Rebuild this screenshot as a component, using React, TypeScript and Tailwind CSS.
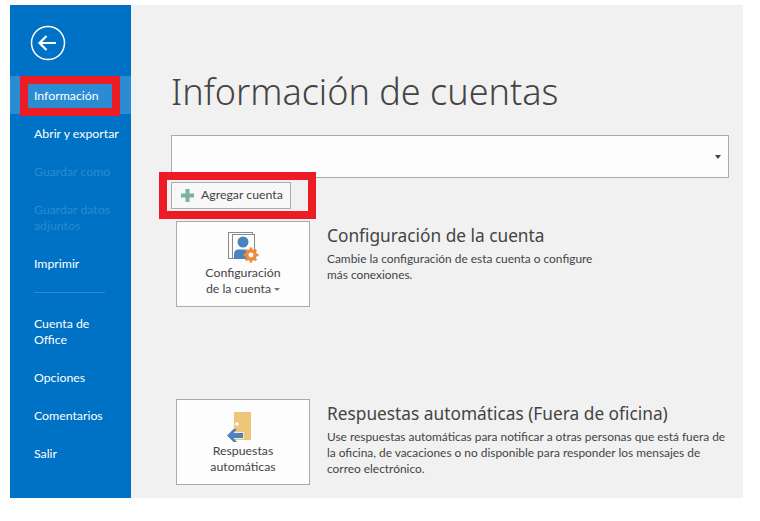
import React from "react";

const font = { fontFamily: '"Noto Sans", "Open Sans", sans-serif' };

const navTop = [
  { label: ["Información"], active: true },
  { label: ["Abrir y exportar"] },
  { label: ["Guardar como"], disabled: true },
  { label: ["Guardar datos", "adjuntos"], disabled: true },
  { label: ["Imprimir"] },
];

const navBottom = [
  { label: ["Cuenta de", "Office"] },
  { label: ["Opciones"] },
  { label: ["Comentarios"] },
  { label: ["Salir"] },
];

type NavEntry = { label: string[]; active?: boolean; disabled?: boolean };

function NavItem({ item }: { item: NavEntry }) {
  return (
    <div
      className={
        "pl-6 pt-[12px] pb-[10px] font-['Lato'] text-[12.3px] leading-4 " +
        (item.active ? "bg-[#2a8dd4] " : "") +
        (item.disabled ? "text-[#2b8ad0]" : "text-white")
      }
    >
      {item.label.map((l) => (
        <div key={l} className="whitespace-nowrap">
          {l}
        </div>
      ))}
    </div>
  );
}

function BackIcon() {
  return (
    <svg width="36" height="36" viewBox="0 0 36 36" fill="none" stroke="white">
      <circle cx="18" cy="18" r="16.5" strokeWidth="1.5" />
      <path d="M26 18H9.5M16.5 11l-7 7 7 7" strokeWidth="2.2" />
    </svg>
  );
}

function AccountIcon() {
  return (
    <svg width="32" height="32" viewBox="0 0 32 32" className="block">
      <rect x="1.5" y="0.5" width="24" height="26" fill="#fdfdfd" stroke="#8a8a8a" />
      <rect x="5.5" y="2.5" width="22" height="24" fill="#fdfdfd" stroke="#8a8a8a" />
      <circle cx="16" cy="10" r="5.5" fill="#4a83bd" />
      <path d="M7 27v-5c0-3 2-4.500 4-4.500h6c2 0 3 1.500 3 4.500v5z" fill="#4a83bd" />
      <circle cx="24" cy="23" r="4.200" fill="#fdfdfd" stroke="#ed8b3c" strokeWidth="3.400" />
      <path
        d="M24 15.500v3M24 27.500v3M16.500 23h3M28.500 23h3M18.700 17.700l2 2M27.300 26.300l2 2M18.700 28.300l2-2M27.300 19.700l2-2"
        stroke="#ed8b3c"
        strokeWidth="2.400"
      />
    </svg>
  );
}

function ReplyIcon() {
  return (
    <svg width="32" height="30" viewBox="0 0 32 30" className="block">
      <rect x="7" y="0" width="17" height="28" fill="#eec67a" />
      <rect x="8.500" y="10.500" width="3" height="3" fill="#fff" />
      <path d="M6 20h11v7H6z" fill="#fff" opacity="0.6" />
      <path d="M0 23.500 6.500 17H10l-3.500 4H16v5H6.500l3.500 4H6.500z" fill="#4a83bd" />
    </svg>
  );
}

function ActionCard({
  icon,
  lines,
  caret,
}: {
  icon: React.ReactNode;
  lines: string[];
  caret?: boolean;
}) {
  return (
    <div className="ml-[5px] flex h-[86px] w-[134px] shrink-0 flex-col items-center justify-end border border-[#ababab] bg-[#fdfdfd] pb-[9px] font-['Lato'] text-[12.3px] leading-4 text-[#444]">
      <div className="mb-[1px]">{icon}</div>
      {lines.map((l, i) => (
        <div key={l} className="flex items-center whitespace-nowrap">
          {l}
          {caret && i === lines.length - 1 && (
            <span className="ml-[3px] mt-[1px] h-0 w-0 border-x-[3px] border-t-[3px] border-x-transparent border-t-[#777]" />
          )}
        </div>
      ))}
    </div>
  );
}

function Section({
  title,
  text,
  children,
}: {
  title: string;
  text: string[];
  children: React.ReactNode;
}) {
  return (
    <div className="flex">
      {children}
      <div className="ml-[17px] pt-[1px]">
        <div className="whitespace-nowrap text-[17.3px] leading-7 text-[#444]">{title}</div>
        <div className="mt-[1px] font-['Lato'] text-[11.9px] leading-4 text-[#444]">
          {text.map((t) => (
            <div key={t} className="whitespace-nowrap">
              {t}
            </div>
          ))}
        </div>
      </div>
    </div>
  );
}

export default function App() {
  return (
    <div className="relative h-[521px] w-[760px] overflow-hidden bg-white pl-[10px] pt-[5px]" style={font}>
      <div className="flex h-[493px] w-[733px]">
        <div className="w-[121px] shrink-0 bg-[#0072c6]">
          <div className="flex h-[71px] items-start pl-[20px] pt-[20px]">
            <BackIcon />
          </div>
          {navTop.map((item) => (
            <NavItem key={item.label[0]} item={item} />
          ))}
          <div className="ml-6 mt-[10px] mb-[11px] h-px w-[71px] bg-[#2a8dd4]" />
          {navBottom.map((item) => (
            <NavItem key={item.label[0]} item={item} />
          ))}
        </div>

        <div className="flex-1 overflow-hidden bg-[#f1f1f1] pl-[40px] pr-[14px]">
          <h1 className="mt-[60px] whitespace-nowrap text-[36px] font-light leading-[54px] text-[#444]">
            Información de cuentas
          </h1>
          <div className="relative mt-4 h-[43px] border border-[#ababab] bg-[#fdfdfd]">
            <span className="absolute right-[7px] top-[19px] h-0 w-0 border-x-[3.5px] border-t-[4px] border-x-transparent border-t-[#444]" />
          </div>
          <div className="mt-1 flex h-[27px] w-[120px] items-center border border-[#ababab] bg-[#f8f8f8] pl-[9px] font-['Lato'] text-[12.3px] text-[#444]">
            <svg width="13" height="13" viewBox="0 0 13 13" className="mr-[7px]">
              <path d="M4.500 0h4v4.500H13v4H8.500V13h-4V8.500H0v-4h4.500z" fill="#7fb19d" />
            </svg>
            Agregar cuenta
          </div>
          <div className="mt-3">
            <Section
              title="Configuración de la cuenta"
              text={["Cambie la configuración de esta cuenta o configure", "más conexiones."]}
            >
              <ActionCard icon={<AccountIcon />} lines={["Configuración", "de la cuenta"]} caret />
            </Section>
          </div>
          <div className="mt-[92px]">
            <Section
              title="Respuestas automáticas (Fuera de oficina)"
              text={[
                "Use respuestas automáticas para notificar a otras personas que está fuera de",
                "la oficina, de vacaciones o no disponible para responder los mensajes de",
                "correo electrónico.",
              ]}
            >
              <ActionCard icon={<ReplyIcon />} lines={["Respuestas", "automáticas"]} />
            </Section>
          </div>
        </div>
      </div>

      {/* red annotation boxes drawn over the screenshot */}
      <div className="absolute left-[20px] top-[76px] h-[40px] w-[100px] border-[8px] border-[#ed1c24]" />
      <div className="absolute left-[159px] top-[172px] h-[47px] w-[157px] border-[8px] border-[#ed1c24]" />
    </div>
  );
}
